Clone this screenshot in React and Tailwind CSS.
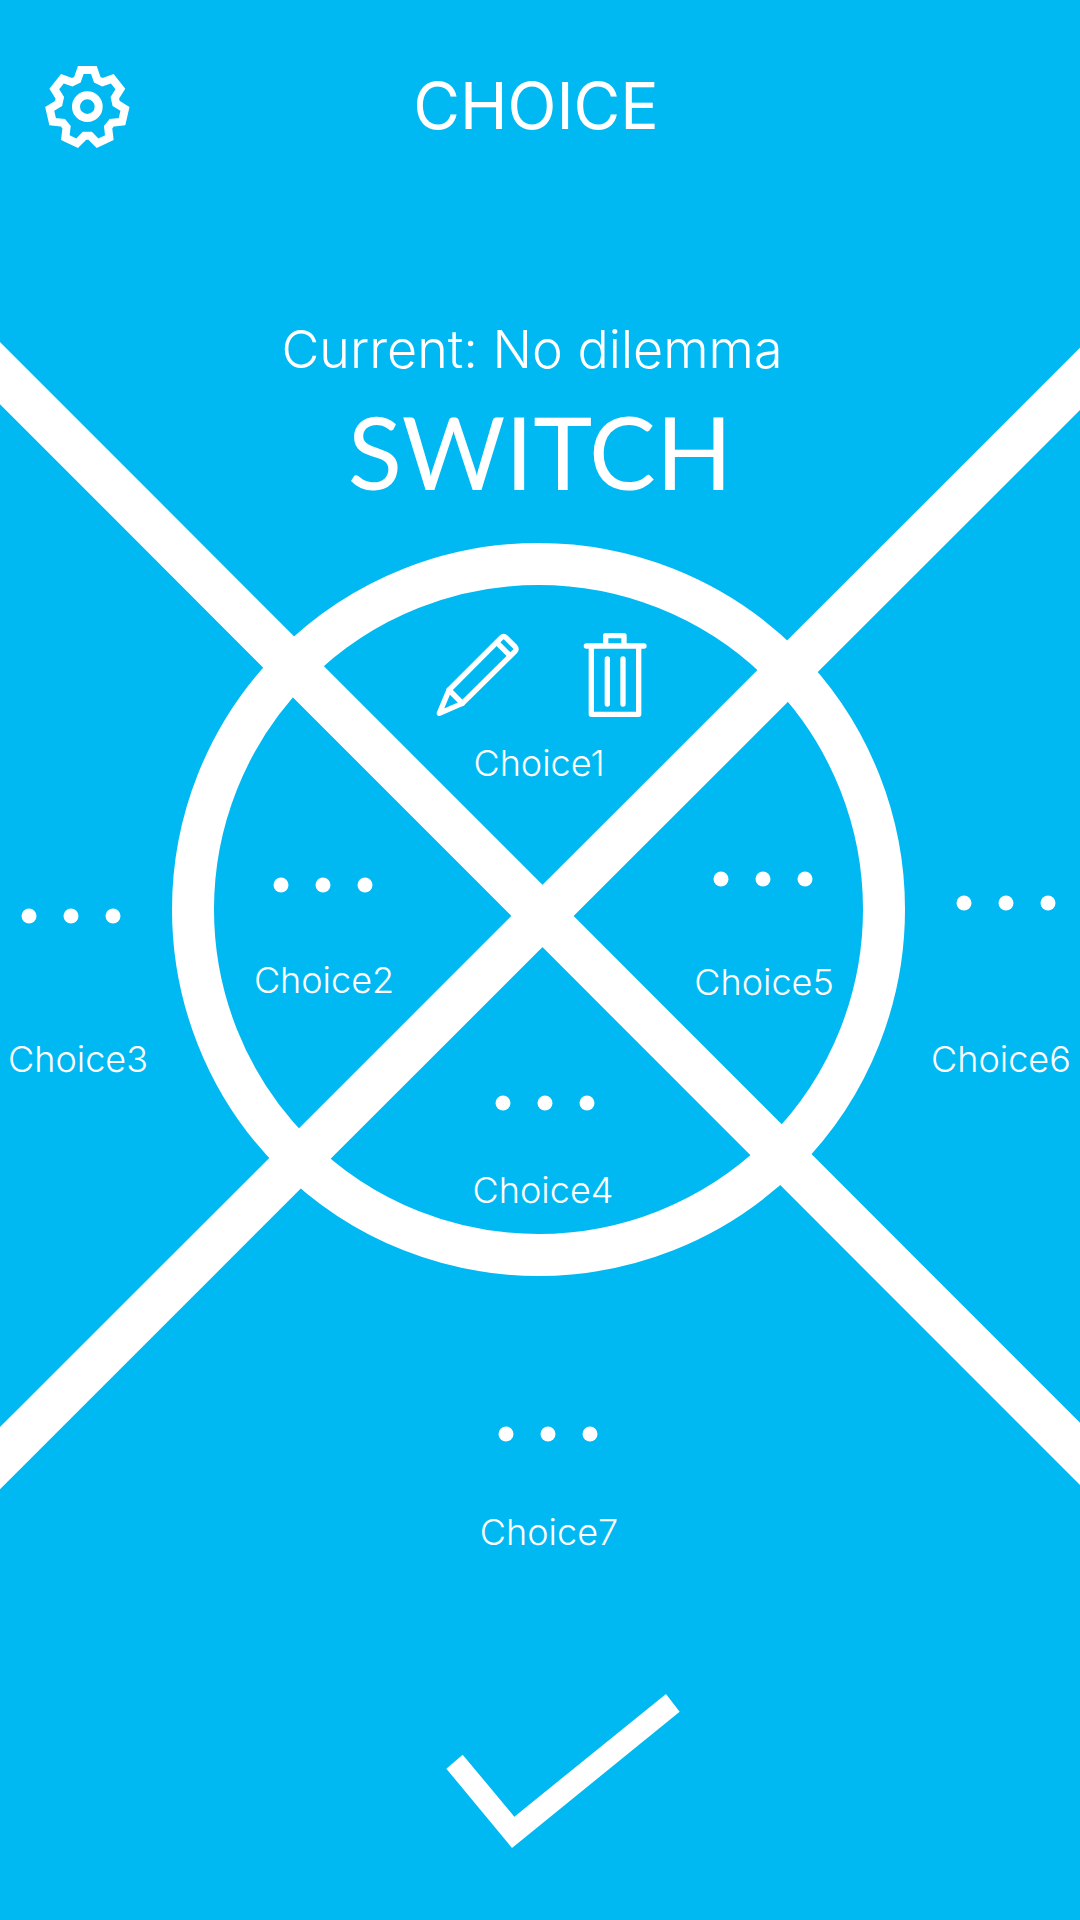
import React from 'react';

// Coordinate space of the wheel diagram.
const W = 1080;
const H = 1240;

const choices = [
  { name: 'Choice1', label: [539, 423], editing: true },
  { name: 'Choice2', dots: [323, 545], label: [324, 640] },
  { name: 'Choice3', dots: [71, 576], label: [78, 719] },
  { name: 'Choice4', dots: [545, 763], label: [543, 850] },
  { name: 'Choice5', dots: [763, 539], label: [764, 642] },
  { name: 'Choice6', dots: [1006, 563], label: [1001, 719] },
  { name: 'Choice7', dots: [548, 1094], label: [549, 1192] },
];

const place = ([x, y]) => ({ left: `${(x / W) * 100}%`, top: `${(y / H) * 100}%` });

const gearPoints = Array.from({ length: 7 }, (_, i) =>
  [[-20, 87], [-10, 113], [10, 113], [20, 87]].map(([offset, r]) => {
    const a = ((i * 360) / 7 + offset - 90) * (Math.PI / 180);
    return `${(172 + r * Math.cos(a)).toFixed(1)},${(171 + r * Math.sin(a)).toFixed(1)}`;
  })
).flat().join(' ');

function GearIcon() {
  return (
    <svg viewBox="0 0 360 360" className="size-[120px]" fill="none" stroke="currentColor" strokeWidth="24" aria-hidden="true">
      <polygon points={gearPoints} />
      <circle cx="172" cy="170" r="34" />
    </svg>
  );
}

function PencilIcon() {
  return (
    <svg viewBox="43 60 264 264" className="size-[88px]" fill="none" stroke="currentColor" strokeWidth="16" strokeLinecap="round" strokeLinejoin="round" aria-hidden="true">
      <path d="M59 310 88 240 245 83Q252 76 259 83L286 110Q292 117 286 124L128 280Z" />
      <path d="M88 240 128 280M232 98 270 136" />
    </svg>
  );
}

function TrashIcon() {
  return (
    <svg viewBox="486 60 198 264" className="h-[88px] w-[66px]" fill="none" stroke="currentColor" strokeWidth="16" strokeLinecap="round" strokeLinejoin="round" aria-hidden="true">
      <path d="M499 108H672M514 110V313H656V110M557 106V77H612V106M562 147V282M609 147V282" />
    </svg>
  );
}

function CheckIcon() {
  return (
    <svg viewBox="-90 54 840 498" className="h-[166px] w-[280px]" fill="currentColor" aria-hidden="true">
      <polygon points="98,254 253,440 708,72 749,125 246,534 49,296" />
    </svg>
  );
}

function Choice({ choice }) {
  return (
    <li>
      {choice.editing ? (
        <>
          <button type="button" aria-label={`Edit ${choice.name}`} className="absolute -translate-1/2" style={place([478, 334])}>
            <PencilIcon />
          </button>
          <button type="button" aria-label={`Delete ${choice.name}`} className="absolute -translate-1/2" style={place([615, 334])}>
            <TrashIcon />
          </button>
        </>
      ) : (
        <button type="button" aria-label={`Options for ${choice.name}`} className="absolute flex -translate-1/2 gap-[27px]" style={place(choice.dots)}>
          <span className="size-[15px] rounded-full bg-white" />
          <span className="size-[15px] rounded-full bg-white" />
          <span className="size-[15px] rounded-full bg-white" />
        </button>
      )}
      <span className="absolute -translate-1/2 text-[36px] leading-10" style={place(choice.label)}>
        {choice.name}
      </span>
    </li>
  );
}

export default function App() {
  return (
    <div className="flex min-h-screen flex-col overflow-hidden bg-[#00b9f2] font-['Inter',sans-serif] font-light text-white">
      <header className="grid grid-cols-[120px_1fr_120px] items-center px-[30px] pt-[50px]">
        <button type="button" aria-label="Settings">
          <GearIcon />
        </button>
        <h1 className="pr-2 pb-2 text-center text-[64px] leading-[72px] font-normal">CHOICE</h1>
      </header>

      <main className="flex flex-col">
        <section className="relative z-10 mt-[148px] flex flex-col items-center self-center">
          <p className="pr-4 text-[52px] leading-[64px]">Current: No dilemma</p>
          <button type="button" className="mt-[18px] font-['Lato',sans-serif] text-[100px] leading-[102px] font-normal">SWITCH</button>
        </section>

        <section aria-label="Choices" className="relative -mt-[162px] aspect-[1080/1240] w-full">
          <svg viewBox="0 0 1080 1240" className="h-full w-full" fill="none" stroke="white" aria-hidden="true">
            <path d="M-40-7 1120 1154M-40 1158 1120-1" strokeWidth="44" />
            <circle cx="538.5" cy="569.5" r="345.5" strokeWidth="42" />
          </svg>
          <ul>
            {choices.map((choice) => (
              <Choice key={choice.name} choice={choice} />
            ))}
          </ul>
        </section>
      </main>

      <footer className="mt-[108px] flex justify-center">
        <button type="button" aria-label="Confirm">
          <CheckIcon />
        </button>
      </footer>
    </div>
  );
}
